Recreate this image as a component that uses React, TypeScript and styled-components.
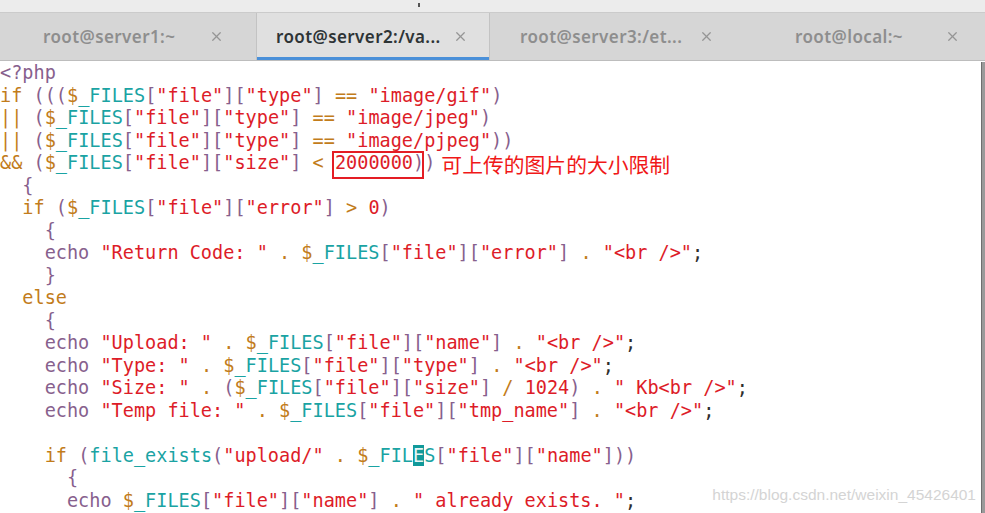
import React from "react";
import styled, { createGlobalStyle } from "styled-components";
import { X } from "lucide-react";

const GlobalStyle = createGlobalStyle`
  html, body {
    margin: 0;
    padding: 0;
    background: #ffffff;
    overflow: hidden;
  }
`;

const colors = {
  purple: "#87608d",
  orange: "#c27c1b",
  teal: "#1aa3a3",
  red: "#dd1c28",
  plain: "#2e2e2e",
};

const tabs = [
  { label: "root@server1:~", active: false, w: 256, pl: 43, pr: 32 },
  { label: "root@server2:/va...", active: true, w: 234, pl: 19, pr: 21 },
  { label: "root@server3:/et...", active: false, w: 247, pl: 30, pr: 23 },
  { label: "root@local:~", active: false, w: 248, pl: 58, pr: 25 },
];

const code = [
  "<?php",
  'if ((($_FILES["file"]["type"] == "image/gif")',
  '|| ($_FILES["file"]["type"] == "image/jpeg")',
  '|| ($_FILES["file"]["type"] == "image/pjpeg"))',
  '&& ($_FILES["file"]["size"] < 2000000))',
  "  {",
  '  if ($_FILES["file"]["error"] > 0)',
  "    {",
  '    echo "Return Code: " . $_FILES["file"]["error"] . "<br />";',
  "    }",
  "  else",
  "    {",
  '    echo "Upload: " . $_FILES["file"]["name"] . "<br />";',
  '    echo "Type: " . $_FILES["file"]["type"] . "<br />";',
  '    echo "Size: " . ($_FILES["file"]["size"] / 1024) . " Kb<br />";',
  '    echo "Temp file: " . $_FILES["file"]["tmp_name"] . "<br />";',
  "",
  '    if (file_exists("upload/" . $_FILES["file"]["name"]))',
  "      {",
  '      echo $_FILES["file"]["name"] . " already exists. ";',
];

type Kind = keyof typeof colors;
type Token = { kind: Kind; text: string };

const tokenRe =
  /(<\?php)|("[^"]*")|(\$)|(\b(?:if|else)\b)|(\becho\b)|([A-Za-z_][A-Za-z0-9_]*)|(\d+)|([()[\]{}])|(==|\|\||&&|[<>/.])|(\s+)|(.)/g;

function tokenize(line: string): Token[] {
  const out: Token[] = [];
  let m: RegExpExecArray | null;
  tokenRe.lastIndex = 0;
  while ((m = tokenRe.exec(line))) {
    let kind: Kind = "plain";
    if (m[1] || m[5] || m[8]) kind = "purple";
    else if (m[2] || m[7]) kind = "red";
    else if (m[3] || m[4] || m[9]) kind = "orange";
    else if (m[6]) kind = "teal";
    out.push({ kind, text: m[0] });
  }
  return out;
}

// line 17, column of the cursor
const cursor = { line: 17, col: 37 };

export default function App() {
  return (
    <Window>
      <GlobalStyle />
      <TopStrip>
        <Tick />
      </TopStrip>
      <TabBar>
        {tabs.map((t) => (
          <Tab key={t.label} $active={t.active} $w={t.w} $pl={t.pl} $pr={t.pr}>
            <TabLabel>{t.label}</TabLabel>
            <CloseBtn>
              <X size={15} strokeWidth={2} />
            </CloseBtn>
          </Tab>
        ))}
      </TabBar>
      <Body>
        <Code>
          {code.map((line, i) => (
            <Line key={i}>{renderLine(line, i)}</Line>
          ))}
        </Code>
        <Scrollbar />
      </Body>
      <Watermark>https://blog.csdn.net/weixin_45426401</Watermark>
    </Window>
  );
}

function renderLine(line: string, index: number) {
  if (line === "") return "\u00a0";
  const tokens = tokenize(line);
  let col = 0;
  const parts: React.ReactNode[] = [];
  tokens.forEach((tok, k) => {
    const start = col;
    col += tok.text.length;
    if (index === cursor.line && cursor.col >= start && cursor.col < col) {
      const off = cursor.col - start;
      parts.push(
        <Tok key={k} $kind={tok.kind}>
          {tok.text.slice(0, off)}
          <Cursor>{tok.text[off]}</Cursor>
          {tok.text.slice(off + 1)}
        </Tok>
      );
      return;
    }
    if (tok.text === "2000000") {
      parts.push(
        <Marked key={k}>
          <Tok $kind={tok.kind}>{tok.text}</Tok>
        </Marked>
      );
      return;
    }
    parts.push(
      <Tok key={k} $kind={tok.kind}>
        {tok.text}
      </Tok>
    );
  });
  if (index === 4) {
    parts.push(<Note key="note">可上传的图片的大小限制</Note>);
  }
  return parts;
}

const Window = styled.div`
  position: relative;
  width: 985px;
  height: 513px;
  overflow: hidden;
  background: #ffffff;
  display: flex;
  flex-direction: column;
`;

const TopStrip = styled.div`
  height: 12px;
  background: #ececec;
  border-bottom: 1px solid #cbcbcb;
  position: relative;
`;

const Tick = styled.div`
  position: absolute;
  left: 418px;
  top: 3px;
  width: 2px;
  height: 4px;
  background: #555555;
`;

const TabBar = styled.div`
  display: flex;
  height: 47px;
  background: #d6d6d6;
  border-bottom: 1px solid #bdbdbd;
`;

const Tab = styled.div<{ $active: boolean; $w: number; $pl: number; $pr: number }>`
  box-sizing: border-box;
  width: ${(p) => p.$w}px;
  display: flex;
  align-items: center;
  padding: 0 ${(p) => p.$pr}px 0 ${(p) => p.$pl}px;
  font-family: "Noto Sans", "Open Sans", sans-serif;
  font-size: 17px;
  font-weight: 600;
  letter-spacing: 0.4px;
  color: ${(p) => (p.$active ? "#2e3436" : "#8e8e8e")};
  background: ${(p) => (p.$active ? "#e0e0e0" : "transparent")};
  border-left: ${(p) => (p.$active ? "1px solid #c3c3c3" : "none")};
  border-right: ${(p) => (p.$active ? "1px solid #c3c3c3" : "none")};
  box-shadow: ${(p) => (p.$active ? "inset 0 -3px 0 #4a90d9" : "none")};
`;

const TabLabel = styled.span`
  flex: 1;
  white-space: nowrap;
  overflow: hidden;
`;

const CloseBtn = styled.span`
  display: flex;
  align-items: center;
  color: #959595;
`;

const Body = styled.div`
  flex: 1;
  display: flex;
  min-height: 0;
`;

const Code = styled.div`
  flex: 1;
  padding-top: 1px;
  font-family: "DejaVu Sans Mono", "Liberation Mono", monospace;
  font-size: 18.55px;
  line-height: 22.5px;
  white-space: pre;
  color: ${colors.plain};
`;

const Line = styled.div`
  height: 22.5px;
`;

const Tok = styled.span<{ $kind: Kind }>`
  color: ${(p) => colors[p.$kind]};
`;

const Cursor = styled.span`
  background: #11999a;
  color: #e8f6f6;
`;

const Marked = styled.span`
  position: relative;
  &::after {
    content: "";
    position: absolute;
    left: -3px;
    right: -11px;
    top: -1px;
    bottom: -6px;
    border: 2px solid #e41d24;
  }
`;

const Note = styled.span`
  display: inline-block;
  margin-left: 6px;
  font-family: "Noto Sans CJK SC", sans-serif;
  font-size: 20.8px;
  line-height: 1;
  color: #f01818;
  vertical-align: -4px;
`;

const Scrollbar = styled.div`
  width: 3px;
  margin-top: 1px;
  background: #9a9a9a;
  border-left: 1px solid #6f6f6f;
`;

const Watermark = styled.div`
  position: absolute;
  right: 9px;
  bottom: 9px;
  font-family: "Liberation Sans", Arial, sans-serif;
  font-size: 15.5px;
  color: #d4d4d4;
  text-shadow: 0 0 1px #ffffff;
`;
